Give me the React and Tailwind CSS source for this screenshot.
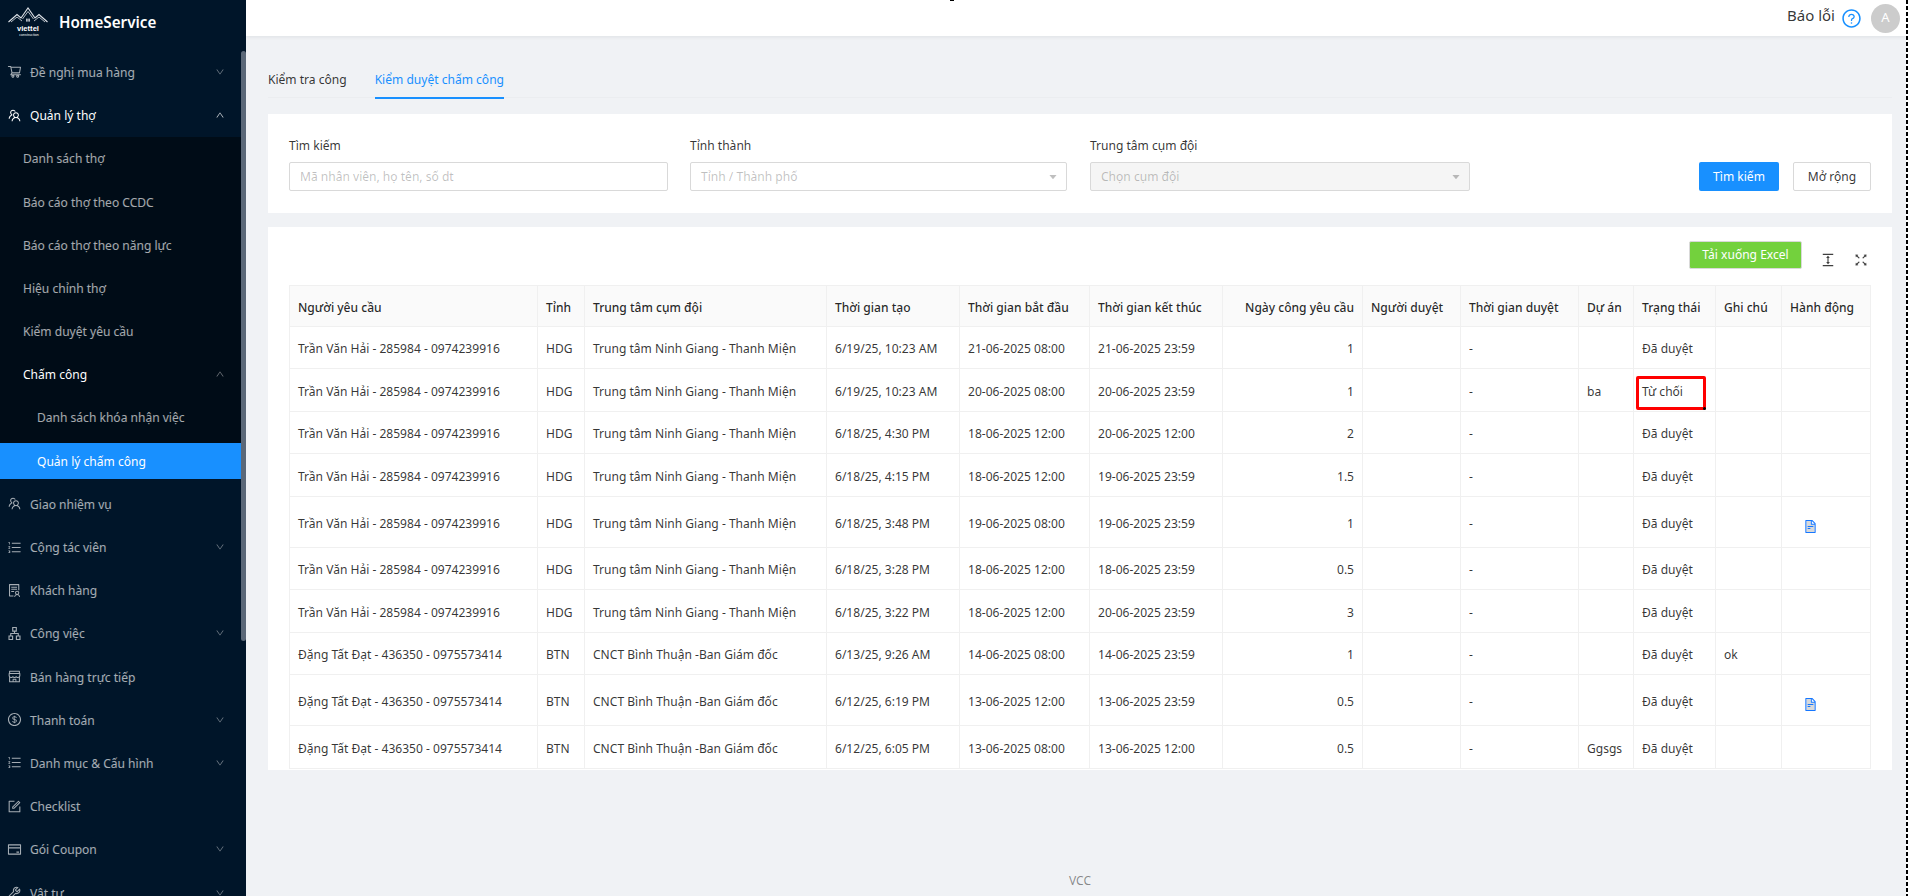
import React from "react";
import {
  AiOutlineShoppingCart, AiOutlineTeam, AiOutlineDown, AiOutlineUp, AiOutlineOrderedList,
  AiOutlineSolution, AiOutlineApartment, AiOutlineShop, AiOutlineDollar, AiOutlineForm,
  AiOutlineCreditCard, AiOutlineTool, AiOutlineQuestionCircle, AiFillCaretDown,
  AiOutlineColumnHeight, AiOutlineFullscreen, AiTwotoneFileText,
} from "react-icons/ai";

const Logo = () => (
  <svg viewBox="0 0 40 30" className="w-[40px] h-[30px] shrink-0" fill="none" stroke="#dfe3e8" strokeWidth="1.1">
    <path d="M0.5 15 L9 7.5 L13 11 L20 1 L27 11 L31 7.5 L39.5 15" />
    <path d="M3 15 L9 10 L14 14 M14.5 12 L20 4.5 L25.5 12 M26 14 L31 10 L37 15" strokeWidth="0.8" />
    <rect x="18.2" y="11.6" width="1.4" height="3" fill="#dfe3e8" stroke="none" />
    <rect x="20.4" y="11.6" width="1.4" height="3" fill="#dfe3e8" stroke="none" />
    <text x="20" y="23.5" textAnchor="middle" fontSize="7.6" fontWeight="700" fill="#ffffff" stroke="none" fontFamily="Liberation Sans, sans-serif">viettel</text>
    <text x="21" y="29" textAnchor="middle" fontSize="3.6" fill="#ffffff" stroke="none" fontFamily="Liberation Sans, sans-serif">construction</text>
  </svg>
);

const TopItem = ({ icon: Icon, label, chevron, open, active }) => (
  <div className={`h-[36px] my-[3.6px] shrink-0 flex items-center pl-[7px] pr-[16px] ${active ? "text-white" : "text-white/65"}`}>
    <Icon className="w-[15px] h-[15px] mr-[8px] shrink-0" />
    <span className="flex-1 whitespace-nowrap pt-[2px]">{label}</span>
    {chevron && (open
      ? <AiOutlineUp className={`w-[10px] h-[10px] ${active ? "text-white/80" : "text-white/45"}`} />
      : <AiOutlineDown className="w-[10px] h-[10px] text-white/45" />)}
  </div>
);

const SubItem = ({ label, chevron, bright }) => (
  <div className={`h-[36px] my-[3.6px] shrink-0 flex items-center pl-[23px] pr-[16px] ${bright ? "text-white" : "text-white/65"}`}>
    <span className="flex-1 whitespace-nowrap pt-[2px]">{label}</span>
    {chevron && <AiOutlineUp className="w-[10px] h-[10px] text-white/45" />}
  </div>
);

const Sidebar = () => (
  <aside className="w-[246px] h-full shrink-0 flex bg-[#001529] overflow-hidden">
    <div className="w-[241px] flex flex-col shrink-0">
      <div className="h-[50.4px] shrink-0 flex items-center pl-[8px] pb-[6px]">
        <Logo />
        <span className="ml-[11px] text-white text-[15.2px] font-semibold whitespace-nowrap">HomeService</span>
      </div>
      <TopItem icon={AiOutlineShoppingCart} label="Đề nghị mua hàng" chevron />
      <TopItem icon={AiOutlineTeam} label="Quản lý thợ" chevron open active />
      <div className="flex flex-col bg-[#000c17] shrink-0 mb-[3.6px]">
        <SubItem label="Danh sách thợ" />
        <SubItem label="Báo cáo thợ theo CCDC" />
        <SubItem label="Báo cáo thợ theo năng lực" />
        <SubItem label="Hiệu chỉnh thợ" />
        <SubItem label="Kiểm duyệt yêu cầu" />
        <SubItem label="Chấm công" chevron bright />
        <div className="h-[36px] my-[3.6px] shrink-0 flex items-center pl-[37px] pt-[2px] text-white/65 whitespace-nowrap">Danh sách khóa nhận việc</div>
        <div className="h-[36px] mt-[3.6px] shrink-0 flex items-center pl-[37px] pt-[2px] text-white bg-[#1890ff] whitespace-nowrap">Quản lý chấm công</div>
      </div>
      <TopItem icon={AiOutlineTeam} label="Giao nhiệm vụ" />
      <TopItem icon={AiOutlineOrderedList} label="Cộng tác viên" chevron />
      <TopItem icon={AiOutlineSolution} label="Khách hàng" />
      <TopItem icon={AiOutlineApartment} label="Công việc" chevron />
      <TopItem icon={AiOutlineShop} label="Bán hàng trực tiếp" />
      <TopItem icon={AiOutlineDollar} label="Thanh toán" chevron />
      <TopItem icon={AiOutlineOrderedList} label="Danh mục & Cấu hình" chevron />
      <TopItem icon={AiOutlineForm} label="Checklist" />
      <TopItem icon={AiOutlineCreditCard} label="Gói Coupon" chevron />
      <TopItem icon={AiOutlineTool} label="Vật tư" chevron />
    </div>
    <div className="w-[5px] shrink-0 pt-[51px]">
      <div className="h-[590px] bg-[#5b6878] rounded-[3px]" />
    </div>
  </aside>
);

const Field = ({ label, className, children }) => (
  <div className={`flex flex-col ${className}`}>
    <label className="h-[18px] mb-[7px] leading-[18px] text-black/80 whitespace-nowrap">{label}</label>
    {children}
  </div>
);

const Select = ({ placeholder, disabled }) => (
  <div className={`h-[29px] border border-[#d9d9d9] rounded-[2px] flex items-center pl-[10px] pr-[8px] ${disabled ? "bg-[#f5f5f5]" : "bg-white"}`}>
    <span className="flex-1 pt-[2px] text-black/25">{placeholder}</span>
    <AiFillCaretDown className="w-[10px] h-[10px] text-black/25" />
  </div>
);

const cols = ["w-[249px]", "w-[47px]", "w-[242px]", "w-[133px]", "w-[130px]", "w-[133px]", "w-[140px]", "w-[98px]", "w-[118px]", "w-[55px]", "w-[82px]", "w-[66px]", "w-[89px]"];
const headers = ["Người yêu cầu", "Tỉnh", "Trung tâm cụm đội", "Thời gian tạo", "Thời gian bắt đầu", "Thời gian kết thúc", "Ngày công yêu cầu", "Người duyệt", "Thời gian duyệt", "Dự án", "Trạng thái", "Ghi chú", "Hành động"];

const HAI = ["Trần Văn Hải - 285984 - 0974239916", "HDG", "Trung tâm Ninh Giang - Thanh Miện"];
const DAT = ["Đặng Tất Đạt - 436350 - 0975573414", "BTN", "CNCT Bình Thuận -Ban Giám đốc"];
const rows = [
  { h: "h-[42px]", base: HAI, tao: "6/19/25, 10:23 AM", bd: "21-06-2025 08:00", kt: "21-06-2025 23:59", n: "1", tt: "Đã duyệt" },
  { h: "h-[43px]", base: HAI, tao: "6/19/25, 10:23 AM", bd: "20-06-2025 08:00", kt: "20-06-2025 23:59", n: "1", da: "ba", tt: "Từ chối", flag: true },
  { h: "h-[42px]", base: HAI, tao: "6/18/25, 4:30 PM", bd: "18-06-2025 12:00", kt: "20-06-2025 12:00", n: "2", tt: "Đã duyệt" },
  { h: "h-[43px]", base: HAI, tao: "6/18/25, 4:15 PM", bd: "18-06-2025 12:00", kt: "19-06-2025 23:59", n: "1.5", tt: "Đã duyệt" },
  { h: "h-[51px]", base: HAI, tao: "6/18/25, 3:48 PM", bd: "19-06-2025 08:00", kt: "19-06-2025 23:59", n: "1", tt: "Đã duyệt", file: true },
  { h: "h-[42px]", base: HAI, tao: "6/18/25, 3:28 PM", bd: "18-06-2025 12:00", kt: "18-06-2025 23:59", n: "0.5", tt: "Đã duyệt" },
  { h: "h-[43px]", base: HAI, tao: "6/18/25, 3:22 PM", bd: "18-06-2025 12:00", kt: "20-06-2025 23:59", n: "3", tt: "Đã duyệt" },
  { h: "h-[42px]", base: DAT, tao: "6/13/25, 9:26 AM", bd: "14-06-2025 08:00", kt: "14-06-2025 23:59", n: "1", tt: "Đã duyệt", gc: "ok" },
  { h: "h-[51px]", base: DAT, tao: "6/12/25, 6:19 PM", bd: "13-06-2025 12:00", kt: "13-06-2025 23:59", n: "0.5", tt: "Đã duyệt", file: true },
  { h: "h-[43px]", base: DAT, tao: "6/12/25, 6:05 PM", bd: "13-06-2025 08:00", kt: "13-06-2025 12:00", n: "0.5", da: "Ggsgs", tt: "Đã duyệt" },
];

const td = "border-r border-b border-[#f0f0f0] px-[8px] pt-[4px] align-middle whitespace-nowrap first:border-l";

const DataTable = () => (
  <table className="table-fixed border-separate border-spacing-0 w-[1582px] text-black/80">
    <colgroup>{cols.map((c, i) => <col key={i} className={c} />)}</colgroup>
    <thead>
      <tr className="h-[42px] bg-[#fafafa]">
        {headers.map((h, i) => (
          <th key={h} className={`${td} border-t font-medium text-black/85 ${i === 6 ? "text-right" : "text-left"}`}>{h}</th>
        ))}
      </tr>
    </thead>
    <tbody>
      {rows.map((r, i) => (
        <tr key={i} className={r.h}>
          <td className={td}>{r.base[0]}</td>
          <td className={td}>{r.base[1]}</td>
          <td className={td}>{r.base[2]}</td>
          <td className={td}>{r.tao}</td>
          <td className={td}>{r.bd}</td>
          <td className={td}>{r.kt}</td>
          <td className={`${td} text-right`}>{r.n}</td>
          <td className={td}></td>
          <td className={td}>-</td>
          <td className={td}>{r.da}</td>
          <td className={`${td} relative`}>
            {r.tt}
            {r.flag && (
              <div className="absolute left-[2px] top-[7px] w-[70px] h-[34px] border-[3px] border-[#ff0000] rounded-[2px]">
                <div className="absolute right-[-3px] bottom-[-3px] w-[3px] h-[3px] bg-black rounded-full" />
              </div>
            )}
          </td>
          <td className={td}>{r.gc}</td>
          <td className={td}>
            {r.file && <AiTwotoneFileText className="ml-[13px] mt-[4px] w-[15px] h-[15px] text-[#1677ff]" />}
          </td>
        </tr>
      ))}
    </tbody>
  </table>
);

export default function App() {
  return (
    <div className="relative w-[1908px] h-[896px] flex overflow-hidden bg-[#f0f2f5] font-['Noto_Sans',sans-serif] text-[12.05px]">
      <Sidebar />
      <div className="flex-1 min-w-0 flex flex-col">
        <header className="h-[36px] shrink-0 bg-white shadow-[0_1px_4px_rgba(0,21,41,0.08)] flex items-center justify-end pr-[6px]">
          <span className="text-[15px] text-black/80 mb-[6px]">Báo lỗi</span>
          <AiOutlineQuestionCircle className="ml-[6px] w-[21px] h-[21px] text-[#1890ff]" />
          <div className="ml-[9px] w-[29px] h-[29px] rounded-full bg-[#cccccc] text-white flex items-center justify-center text-[13px]">A</div>
        </header>
        <main className="flex-1 flex flex-col pl-[22px] pr-[14px]">
          <nav className="h-[27px] mt-[35px] shrink-0 flex border-b border-[#ebedf0] mb-[16px]">
            <div className="mr-[28px] h-full text-black/80 leading-[18px] whitespace-nowrap">Kiểm tra công</div>
            <div className="h-[28px] text-[#1890ff] leading-[18px] border-b-2 border-[#1890ff] whitespace-nowrap">Kiểm duyệt chấm công</div>
          </nav>
          <section className="h-[99px] shrink-0 bg-white px-[21px] pt-[23px] flex items-start">
            <Field label="Tìm kiếm" className="w-[379px] mr-[22px]">
              <div className="h-[29px] border border-[#d9d9d9] rounded-[2px] flex items-center px-[10px] pt-[2px] text-black/25">Mã nhân viên, họ tên, số dt</div>
            </Field>
            <Field label="Tỉnh thành" className="w-[377px] mr-[23px]">
              <Select placeholder="Tỉnh / Thành phố" />
            </Field>
            <Field label="Trung tâm cụm đội" className="w-[380px]">
              <Select placeholder="Chọn cụm đội" disabled />
            </Field>
            <div className="ml-auto flex mt-[25px]">
              <button className="w-[80px] h-[29px] pt-[2px] bg-[#1890ff] text-white rounded-[2px] mr-[14px]">Tìm kiếm</button>
              <button className="w-[78px] h-[29px] pt-[2px] bg-white border border-[#d9d9d9] rounded-[2px] text-black/80">Mở rộng</button>
            </div>
          </section>
          <section className="mt-[14px] bg-white pl-[21px] pt-[14px] pb-[1px]">
            <div className="h-[44px] flex items-start pr-[23px]">
              <button className="ml-auto w-[113px] h-[28px] pt-[1px] bg-[#73d13d] text-white rounded-[2px] border border-[#d9d9d9] whitespace-nowrap">Tải xuống Excel</button>
              <AiOutlineColumnHeight className="ml-[18px] mt-[11px] w-[16px] h-[16px] text-black/75" />
              <AiOutlineFullscreen className="ml-[17px] mt-[11px] w-[16px] h-[16px] text-black/75" />
            </div>
            <DataTable />
          </section>
          <footer className="mt-auto h-[30px] shrink-0 flex items-center justify-center text-black/45">VCC</footer>
        </main>
      </div>
      <div className="w-[2px] h-full shrink-0 bg-[repeating-linear-gradient(to_bottom,#000_0,#000_4px,#fff_4px,#fff_6px)]" />
      <div className="absolute left-[950px] top-0 w-[4px] h-[1px] bg-black" />
    </div>
  );
}
